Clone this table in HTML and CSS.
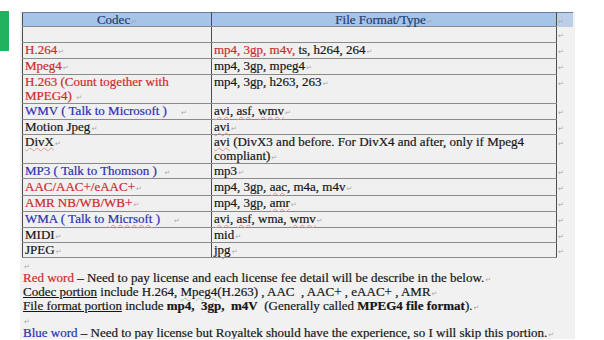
FILE: index.html
```html
<!DOCTYPE html>
<html>
<head>
<meta charset="utf-8">
<link rel="stylesheet" href="styles.css">
</head>
<body>
<div class="page">
  <div class="tab"></div>
  <div class="panel">
    <table class="codecs">
      <colgroup><col class="c1"><col class="c2"><col class="c3"></colgroup>
      <tr class="head"><td class="center">Codec<span class="pm">↵</span></td><td class="center">File Format/Type<span class="pm">↵</span></td><td class="mark"><span class="pm">↵</span></td></tr>
      <tr class="r16"><td></td><td></td><td class="mark"><span class="pm">↵</span></td></tr>
      <tr class="r16"><td class="red">H.264<span class="pm">↵</span></td><td><span class="red">mp4, 3gp, m4v,</span> ts, h264, 264<span class="pm">↵</span></td><td class="mark"><span class="pm">↵</span></td></tr>
      <tr class="r16"><td class="red">Mpeg4<span class="pm">↵</span></td><td>mp4, 3gp, mpeg4<span class="pm">↵</span></td><td class="mark"><span class="pm">↵</span></td></tr>
      <tr><td class="red">H.263 (Count together with MPEG4) <span class="pm">↵</span></td><td>mp4, 3gp, h263, 263<span class="pm">↵</span></td><td class="mark"><span class="pm">↵</span></td></tr>
      <tr class="r16"><td class="blue">WMV ( Talk to Microsoft )&nbsp;&nbsp;&nbsp;&nbsp;<span class="pm">↵</span></td><td><span class="sp">avi</span>, <span class="sp">asf</span>, <span class="sp">wmv</span><span class="pm">↵</span></td><td class="mark"><span class="pm">↵</span></td></tr>
      <tr><td>Motion Jpeg<span class="pm">↵</span></td><td><span class="sp">avi</span><span class="pm">↵</span></td><td class="mark"><span class="pm">↵</span></td></tr>
      <tr><td><span class="sp">DivX</span><span class="pm">↵</span></td><td><span class="sp">avi</span> (DivX3 and before. For DivX4 and after, only if Mpeg4 compliant)<span class="pm">↵</span></td><td class="mark"><span class="pm">↵</span></td></tr>
      <tr class="r14"><td class="blue">MP3 ( Talk to Thomson )&nbsp;&nbsp;<span class="pm">↵</span></td><td>mp3<span class="pm">↵</span></td><td class="mark"><span class="pm">↵</span></td></tr>
      <tr class="r17"><td class="red">AAC/AAC+/eAAC+<span class="pm">↵</span></td><td>mp4, 3gp, <span class="sp">aac</span>, m4a, m4v<span class="pm">↵</span></td><td class="mark"><span class="pm">↵</span></td></tr>
      <tr class="r16"><td class="red">AMR NB/WB/WB+<span class="pm">↵</span></td><td>mp4, 3gp, <span class="sp">amr</span><span class="pm">↵</span></td><td class="mark"><span class="pm">↵</span></td></tr>
      <tr class="r16"><td class="blue">WMA ( Talk to <span class="sp">Micrsoft</span> )&nbsp;&nbsp;&nbsp;&nbsp;<span class="pm">↵</span></td><td><span class="sp">avi</span>, <span class="sp">asf</span>, wma, <span class="sp">wmv</span><span class="pm">↵</span></td><td class="mark"><span class="pm">↵</span></td></tr>
      <tr><td>MIDI<span class="pm">↵</span></td><td>mid<span class="pm">↵</span></td><td class="mark"><span class="pm">↵</span></td></tr>
      <tr><td>JPEG<span class="pm">↵</span></td><td><span class="sp">jpg</span><span class="pm">↵</span></td><td class="mark"><span class="pm">↵</span></td></tr>
    </table>
    <div class="notes">
      <p class="blank"><span class="pm">↵</span></p>
      <p><span class="red">Red word</span> – Need to pay license and each license fee detail will be describe in the below.<span class="pm">↵</span></p>
      <p><span class="ul">Codec portion</span> include H.264, <span class="gsp">Mpeg4</span>(H.263) , AAC&nbsp; , AAC+ , eAAC+ , AMR<span class="pm">↵</span></p>
      <p><span class="ul">File format portion</span> include <b>mp4,&nbsp; 3gp,&nbsp; m4V</b>&nbsp; (Generally called <b>MPEG4 file format</b>).<span class="pm">↵</span></p>
      <p class="blank"><span class="pm">↵</span></p>
      <p><span class="blue">Blue word</span> – <span class="gsp">Need to pay license but Royaltek should</span> have the experience, so I will skip this portion.<span class="pm">↵</span></p>
    </div>
  </div>
</div>
</body>
</html>
```
FILE: styles.css
```css
html, body {
  margin: 0;
  padding: 0;
  background: #ffffff;
}
body {
  font-family: "Liberation Serif", "Times New Roman", serif;
  font-size: 13px;
  color: #161616;
  -webkit-text-stroke: 0.2px currentColor;
}
.page {
  display: flex;
  align-items: flex-start;
  padding-top: 11px;
}
.tab {
  width: 9px;
  height: 40px;
  background: #21b25f;
  flex: none;
}
.panel {
  margin-left: 11px;
  margin-top: 1px;
  width: 553px;
  height: 327px;
  padding-left: 2px;
  background: #f1f1f1;
  flex: none;
  overflow: hidden;
}
.codecs {
  border-collapse: collapse;
  table-layout: fixed;
  width: 550px;
}
.c1 { width: 189px; }
.c2 { width: 345px; }
.c3 { width: 16px; }
.codecs td {
  border-left: 1px solid #4d4d4d;
  border-right: 1px solid #4d4d4d;
  border-top: 1px solid #8a8a8a;
  border-bottom: 1px solid #8a8a8a;
  padding: 0 2px;
  line-height: 14px;
  vertical-align: top;
  background: #f0f0f0;
  height: 14px;
}
.codecs tr.r14 td { height: 13px; }
.codecs tr.r16 td { height: 15px; }
.codecs tr.r17 td { height: 16px; padding-top: 1px; height: 15px; }
.codecs td.mark {
  border: none;
  background: transparent;
  padding: 0 0 0 1px;
}
.codecs tr.head td {
  background: #a6c3e8;
  color: #1f3c6e;
  line-height: 13px;
  height: 13px;
  padding-top: 0;
  border-top: 1px solid #6a7f9c;
}
.codecs tr.head td.mark {
  background: #bccfe9;
}
.center { text-align: center; }
.red { color: #cf2a2a; }
.blue { color: #2b2fb5; }
.pm {
  font-family: "DejaVu Sans", sans-serif;
  font-size: 7px;
  line-height: 1;
  color: #a9a9a9;
  margin-left: 1px;
  -webkit-text-stroke: 0;
}
.mark .pm { margin-left: 0; }
.sp {
  text-decoration: underline wavy #dc9a9a;
  text-decoration-thickness: 1px;
  text-underline-offset: 1px;
}
.gsp {
  text-decoration: underline wavy #9fd09f;
  text-decoration-thickness: 1px;
  text-underline-offset: 1px;
}
.ul {
  text-decoration: underline;
  text-underline-offset: 1px;
}
.notes {
  padding: 0 0 0 1px;
}
.notes p {
  margin: 0;
  line-height: 14px;
  white-space: nowrap;
}
.notes p.blank {
  line-height: 13px;
}
```
